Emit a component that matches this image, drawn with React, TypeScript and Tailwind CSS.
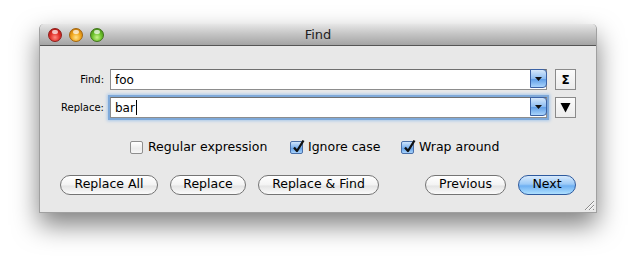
import React from "react";

const font = "font-['DejaVu_Sans',sans-serif]";

const Light = ({ color }: { color: "red" | "yellow" | "green" }) => {
    const bg =
        color === "red"
            ? "bg-[radial-gradient(circle_at_50%_70%,#ff8a80_0%,#e2312b_45%,#a5100c_100%)] border-[#8e1d1a]"
            : color === "yellow"
            ? "bg-[radial-gradient(circle_at_50%_70%,#ffe28a_0%,#f1a61c_45%,#b86a08_100%)] border-[#a2650d]"
            : "bg-[radial-gradient(circle_at_50%_70%,#c8f48a_0%,#6cc12c_45%,#3c7d12_100%)] border-[#3f7418]";
    return (
        <div className={`relative w-[14px] h-[14px] rounded-full border ${bg}`}>
            <div className="absolute left-[3px] top-[1px] w-[6px] h-[4px] rounded-full bg-white/70" />
        </div>
    );
};

const Field = ({ value, focused }: { value: string; focused?: boolean }) => (
    <div
        className={`flex-1 flex h-[21px] bg-white border border-[#8d8d8d] border-t-[#6e6e6e] ${
            focused ? "shadow-[0_0_0_2px_#7fa9d9,0_0_3px_3px_#a9c8ea]" : ""
        }`}
    >
        <div className={`flex-1 flex items-center pl-[4px] text-[12px] text-black ${font}`}>
            {value}
            {focused && <span className="ml-[1px] w-px h-[15px] bg-black" />}
        </div>
        <div className="w-[17px] h-full -my-px -mr-px rounded-r-[4px] border border-[#3b62a5] bg-[linear-gradient(#d6e8fb,#8dbdf2_50%,#5b9be6_51%,#a9d3fb)] flex items-center justify-center">
            <svg width="7" height="4" viewBox="0 0 7 4">
                <path d="M0 0h7L3.5 4z" fill="#111" />
            </svg>
        </div>
    </div>
);

const SideButton = ({ children }: { children: React.ReactNode }) => (
    <div className="w-[21px] h-[21px] border border-[#8a8a8a] bg-[linear-gradient(#fbfbfb,#ececec)] flex items-center justify-center">
        {children}
    </div>
);

const Check = ({ label, checked, w }: { label: string; checked?: boolean; w: string }) => (
    <div className={`flex items-center gap-[5px] ${w}`}>
        {checked ? (
            <div className="relative w-[13px] h-[13px] rounded-[2px] border border-[#4a6fa8] bg-[linear-gradient(#cfe4fb,#7db2ee_50%,#5a9be6_51%,#a7d2fb)]">
                <svg className="absolute -top-[3px] left-[1px]" width="13" height="14" viewBox="0 0 13 14">
                    <path d="M2 8.5 L5 12 L11.5 1.5" stroke="#111" strokeWidth="2.3" fill="none" strokeLinejoin="round" />
                </svg>
            </div>
        ) : (
            <div className="w-[13px] h-[13px] rounded-[2px] border border-[#8e8e8e] bg-[linear-gradient(#ffffff,#ececec_60%,#f7f7f7)]" />
        )}
        <span className={`text-[12.5px] text-black ${font}`}>{label}</span>
    </div>
);

const Pill = ({ label, w, primary }: { label: string; w: string; primary?: boolean }) => (
    <div
        className={`${w} h-[20px] rounded-full border flex items-center justify-center text-[12.5px] text-black ${font} ${
            primary
                ? "border-[#2e5a9e] bg-[linear-gradient(#d8eafc,#9ccaf7_45%,#6fb0f2_55%,#aee0ff)]"
                : "border-[#747474] bg-[linear-gradient(#ffffff,#f3f3f3_50%,#e4e4e4_55%,#fbfbfb)]"
        }`}
    >
        {label}
    </div>
);

export default function App() {
    return (
        <div className="w-[636px] h-[268px] bg-white pl-[39px] pt-[24px]">
            <div className="relative w-[558px] h-[189px] flex flex-col rounded-t-[5px] bg-[#e8e8e8] border border-[#a0a0a0] border-t-0 shadow-[0_12px_26px_rgba(0,0,0,0.5)]">
                {/* title bar */}
                <div className="relative h-[22px] flex items-center rounded-t-[5px] border-b border-[#555] bg-[linear-gradient(#e6e6e6,#c6c6c6_45%,#a4a4a4)]">
                    <div className="flex items-center gap-[7px] pl-[8px]">
                        <Light color="red" />
                        <Light color="yellow" />
                        <Light color="green" />
                    </div>
                    <div className={`absolute inset-0 flex items-center justify-center text-[13px] text-[#1e1e1e] ${font}`}>
                        Find
                    </div>
                </div>

                {/* fields */}
                <div className="flex flex-col gap-[7px] pt-[23px] pr-[20px]">
                    <div className="flex items-center">
                        <div className={`w-[64px] text-right text-[10px] text-black ${font}`}>Find:</div>
                        <div className="flex-1 flex items-center gap-[8px] pl-[6px]">
                            <Field value="foo" />
                            <SideButton>
                                <span className={`text-[12px] font-bold text-black ${font}`}>Σ</span>
                            </SideButton>
                        </div>
                    </div>
                    <div className="flex items-center">
                        <div className={`w-[64px] text-right text-[10px] text-black ${font}`}>Replace:</div>
                        <div className="flex-1 flex items-center gap-[8px] pl-[6px]">
                            <Field value="bar" focused />
                            <SideButton>
                                <svg width="11" height="11" viewBox="0 0 11 11">
                                    <path d="M0.5 1h10L5.5 10.5z" fill="#000" />
                                </svg>
                            </SideButton>
                        </div>
                    </div>
                </div>

                {/* options */}
                <div className="flex items-center pl-[90px] pt-[20px]">
                    <Check label="Regular expression" w="w-[160px]" />
                    <Check label="Ignore case" checked w="w-[111px]" />
                    <Check label="Wrap around" checked w="w-[110px]" />
                </div>

                {/* buttons */}
                <div className="flex items-center pt-[18px] pl-[20px] pr-[20px]">
                    <div className="flex items-center gap-[12px]">
                        <Pill label="Replace All" w="w-[98px]" />
                        <Pill label="Replace" w="w-[76px]" />
                        <Pill label="Replace &amp; Find" w="w-[121px]" />
                    </div>
                    <div className="ml-auto flex items-center gap-[12px]">
                        <Pill label="Previous" w="w-[81px]" />
                        <Pill label="Next" w="w-[58px]" primary />
                    </div>
                </div>

                {/* resize grip */}
                <svg className="absolute right-[1px] bottom-[1px]" width="12" height="12" viewBox="0 0 12 12">
                    <path d="M11 2L2 11M11 6L6 11M11 10L10 11" stroke="#8a8a8a" strokeWidth="1" />
                    <path d="M11 3L3 11M11 7L7 11" stroke="#fafafa" strokeWidth="1" />
                </svg>
            </div>
        </div>
    );
}
